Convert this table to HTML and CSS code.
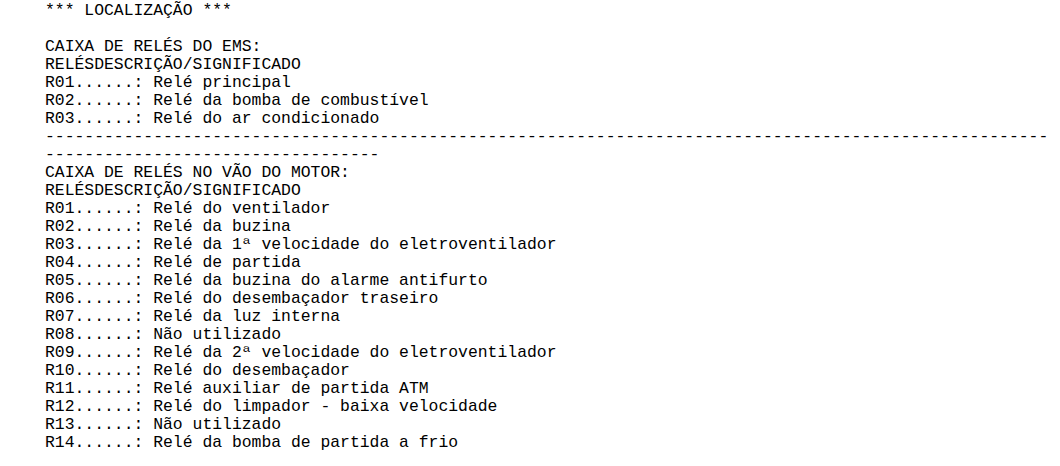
FILE: index.html
```html
<!DOCTYPE html>
<html lang="pt">
<head>
<meta charset="utf-8">
<title>Localização</title>
<link rel="stylesheet" href="styles.css">
</head>
<body>
<pre class="doc">*** LOCALIZAÇÃO ***

CAIXA DE RELÉS DO EMS:
RELÉSDESCRIÇÃO/SIGNIFICADO
R01......: Relé principal
R02......: Relé da bomba de combustível
R03......: Relé do ar condicionado
------------------------------------------------------------------------------------------------------
----------------------------------
CAIXA DE RELÉS NO VÃO DO MOTOR:
RELÉSDESCRIÇÃO/SIGNIFICADO
R01......: Relé do ventilador
R02......: Relé da buzina
R03......: Relé da 1ª velocidade do eletroventilador
R04......: Relé de partida
R05......: Relé da buzina do alarme antifurto
R06......: Relé do desembaçador traseiro
R07......: Relé da luz interna
R08......: Não utilizado
R09......: Relé da 2ª velocidade do eletroventilador
R10......: Relé do desembaçador
R11......: Relé auxiliar de partida ATM
R12......: Relé do limpador - baixa velocidade
R13......: Não utilizado
R14......: Relé da bomba de partida a frio</pre>
</body>
</html>
```

FILE: styles.css
```css
html, body {
  margin: 0;
  padding: 0;
  background: #ffffff;
}

.doc {
  margin: 0;
  padding: 2px 0 0 45px;
  font-family: "Courier New", "Liberation Mono", monospace;
  font-size: 16.4px;
  line-height: 18px;
  color: #000000;
  white-space: pre;
}
```
